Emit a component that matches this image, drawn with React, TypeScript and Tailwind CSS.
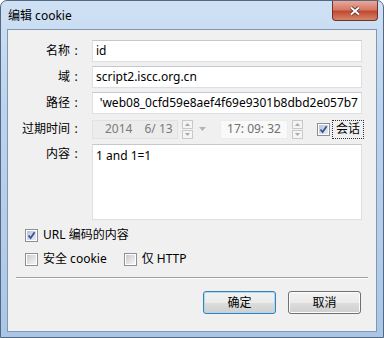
import { type FC, type ReactNode } from "react";

const font = "font-['Noto_Sans','Noto_Sans_CJK_SC',sans-serif]";

const CheckBox: FC<{ checked?: boolean }> = ({ checked }) => (
  <span className="flex w-[13px] h-[13px] shrink-0 items-center justify-center border border-[#8e8f8f] bg-white">
    <span
      className={
        checked
          ? "relative w-[9px] h-[9px] bg-gradient-to-br from-[#b9c2dd] to-[#e6ebf6]"
          : "relative w-[9px] h-[9px] bg-gradient-to-br from-[#cbcbcd] to-[#f6f6f6]"
      }
    >
      {checked && (
        <svg viewBox="0 0 9 9" className="absolute inset-0 w-[9px] h-[9px]">
          <path d="M1.5 4.5 L3.6 7 L7.6 1.2" fill="none" stroke="#3a4f8c" strokeWidth="1.7" />
        </svg>
      )}
    </span>
  </span>
);

const Label: FC<{ children: ReactNode }> = ({ children }) => (
  <div className="flex h-[22px] items-center justify-end text-[12px] text-black">
    <span>{children}</span>
    <span className="w-[12px] text-center">:</span>
  </div>
);

const TextBox: FC<{ value: string; right?: boolean }> = ({ value, right }) => (
  <div
    className={`flex h-[22px] items-center overflow-hidden whitespace-nowrap border border-[#dbdfe6] border-t-[#c5c8cf] bg-white px-[3px] text-[12px] text-black ${
      right ? "justify-end" : ""
    }`}
  >
    {value}
  </div>
);

const Spinner = () => (
  <div className="flex h-[19px] w-[11px] shrink-0 flex-col gap-px">
    {[0, 1].map((i) => (
      <div
        key={i}
        className="flex flex-1 items-center justify-center border border-[#c9c9c9] bg-[#f4f4f4]"
      >
        <svg viewBox="0 0 5 3" className="h-[3px] w-[5px]">
          <path d={i === 0 ? "M0 3 L2.5 0 L5 3Z" : "M0 0 L2.5 3 L5 0Z"} fill="#a8a8a8" />
        </svg>
      </div>
    ))}
  </div>
);

const Button: FC<{ children: ReactNode; primary?: boolean }> = ({ children, primary }) => (
  <div
    className={`flex h-[23px] w-[73px] items-center justify-center rounded-[3px] border text-[12px] text-black bg-[linear-gradient(180deg,#f2f2f2_0%,#ebebeb_50%,#dddddd_51%,#cfcfcf_100%)] ${
      primary
        ? "border-[#3c7fb1] shadow-[inset_0_0_0_1px_#a7dcf6]"
        : "border-[#707070] shadow-[inset_0_0_0_1px_#fcfcfc]"
    }`}
  >
    {children}
  </div>
);

export default function App() {
  return (
    <div
      className={`${font} relative h-[338px] w-[384px] overflow-hidden rounded-t-[7px] border border-[#55687f] bg-[linear-gradient(180deg,#cfe1f4_0%,#bcd4ee_30%,#b3cdea_70%,#aac6e7_100%)]`}
    >
      {/* title */}
      <div className="flex h-[28px] items-center pl-[7px] pt-px text-[12px] text-black">编辑 cookie</div>

      {/* close */}
      <div className="absolute right-[5px] top-0 flex h-[20px] w-[46px] items-center justify-center rounded-b-[4px] border border-t-0 border-[#6f3429] bg-[linear-gradient(180deg,#e9a99b_0%,#d47a66_45%,#c04a32_55%,#d7836c_100%)]">
        <svg viewBox="0 0 12 10" className="h-[10px] w-[12px]">
          <path d="M2 1.5 L10 8.5 M10 1.5 L2 8.5" stroke="#5a2a22" strokeWidth="3.6" />
          <path d="M2 1.5 L10 8.5 M10 1.5 L2 8.5" stroke="#ffffff" strokeWidth="2" />
        </svg>
      </div>

      {/* client */}
      <div className="mx-[6px] h-[303px] border border-[#8297b1] bg-[#f0f0f0] pt-[10px]">
        <div className="grid grid-cols-[74px_270px] gap-x-[10px] gap-y-[4px]">
          <Label>名称</Label>
          <TextBox value="id" />
          <Label>域</Label>
          <TextBox value="script2.iscc.org.cn" />
          <Label>路径</Label>
          <TextBox value="'web08_0cfd59e8aef4f69e9301b8dbd2e057b7" right />

          <Label>过期时间</Label>
          <div className="flex h-[22px] items-center whitespace-nowrap text-[12px]">
            <div className="flex h-[19px] w-[86px] shrink-0 items-center border border-[#e2e2e2] bg-[#ececec] pl-[12px] text-[#7a7a7a]">
              <span>2014</span>
              <span className="ml-[12px]">6/ 13</span>
            </div>
            <div className="ml-[4px]">
              <Spinner />
            </div>
            <svg viewBox="0 0 7 4" className="ml-[6px] h-[4px] w-[7px] shrink-0">
              <path d="M0 0 L3.5 4 L7 0Z" fill="#b4b4b4" />
            </svg>
            <div className="ml-[14px] flex h-[19px] w-[68px] shrink-0 items-center justify-center border border-[#ececec] bg-[#f9f9f9] text-[#6f6f6f]">
              17: 09: 32
            </div>
            <div className="ml-[4px]">
              <Spinner />
            </div>
            <div className="ml-[14px]">
              <CheckBox checked />
            </div>
            <div className="ml-[2px] flex h-[19px] shrink-0 items-center border border-dotted border-[#333] px-[3px] text-black">
              会话
            </div>
          </div>

          <div className="flex h-[20px] items-center justify-end self-start text-[12px]">
            <span>内容</span>
            <span className="w-[12px] text-center">:</span>
          </div>
          <div className="h-[76px] border border-[#dbdfe6] border-t-[#c5c8cf] bg-white px-[3px] pt-[2px] text-[12px] text-black">
            1 and 1=1
          </div>
        </div>

        <div className="mt-[7px] flex h-[16px] items-center pl-[17px] text-[12px] text-black">
          <CheckBox checked />
          <span className="ml-[5px]">URL 编码的内容</span>
        </div>
        <div className="mt-[8px] flex h-[16px] items-center pl-[17px] text-[12px] text-black">
          <CheckBox />
          <span className="ml-[5px]">安全 cookie</span>
          <span className="ml-[17px]">
            <CheckBox />
          </span>
          <span className="ml-[5px]">仅 HTTP</span>
        </div>

        <div className="mx-[8px] mt-[10px] h-[2px] border-t border-[#a0a0a0] border-b border-b-white" />

        <div className="mr-[15px] mt-[12px] flex justify-end gap-[12px]">
          <Button primary>确定</Button>
          <Button>取消</Button>
        </div>
      </div>
    </div>
  );
}
